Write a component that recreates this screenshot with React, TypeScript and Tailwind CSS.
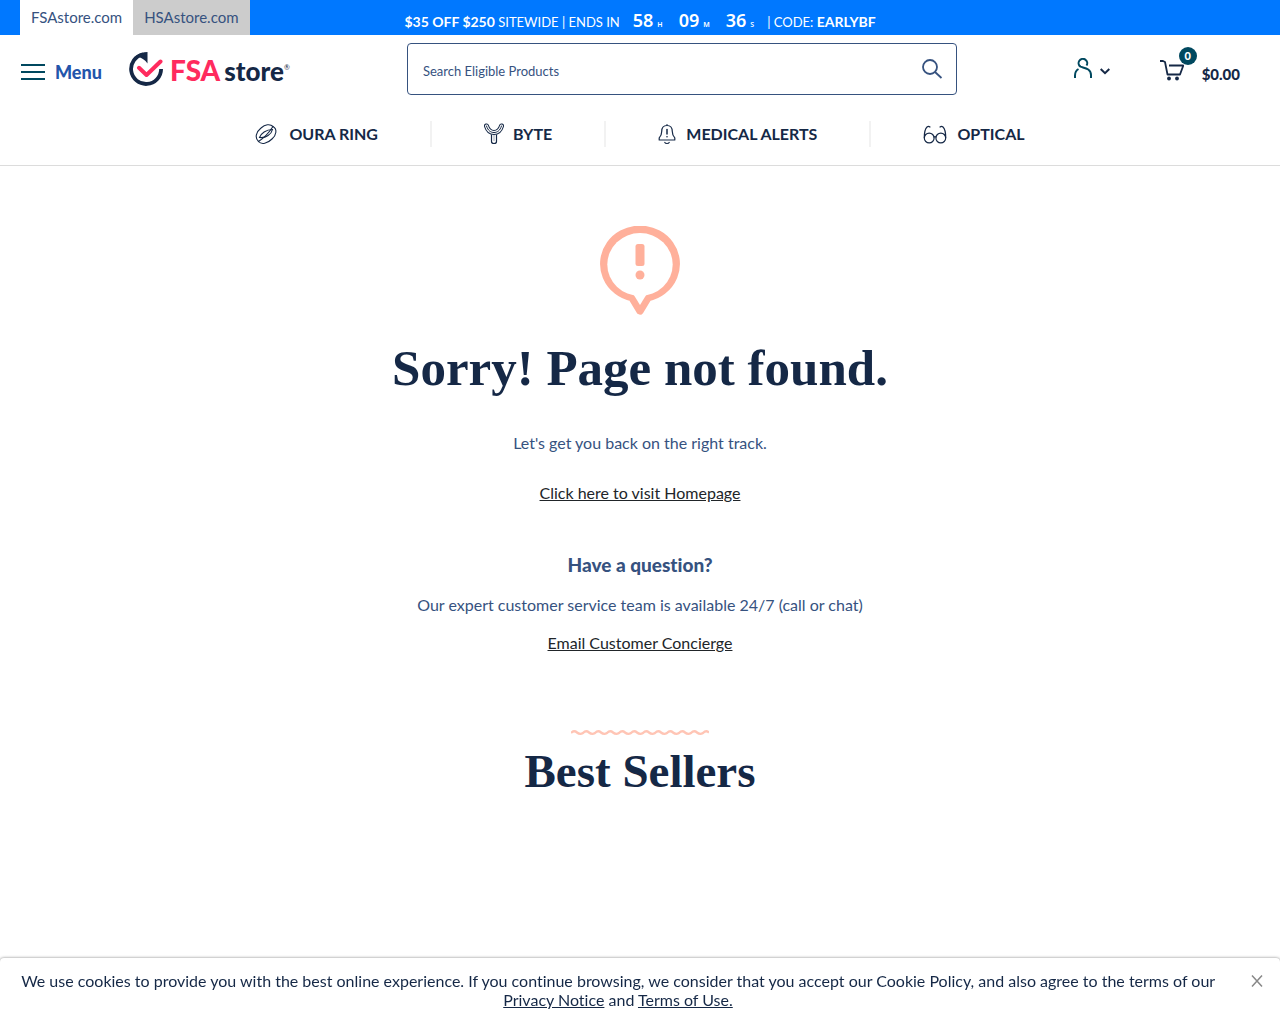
import React from "react";

function LogoMark() {
  return (
    <svg width="34" height="34" viewBox="0 0 34 34" fill="none" aria-hidden="true">
      <path d="M14 2.300A15 15 0 1 0 32.100 17" stroke="#152846" strokeWidth="3.800" />
      <path d="M7 4Q12 .200 18.500 0V11.500Q15 6 7 4Z" fill="#152846" />
      <path d="M10 15.800L17.500 23L31.500 9.500" stroke="#ff2b5e" strokeWidth="4" strokeLinecap="round" strokeLinejoin="round" />
    </svg>
  );
}

function RingIcon() {
  return (
    <svg width="22" height="22" viewBox="0 0 22 22" fill="none" stroke="#152846" strokeWidth="1.100" aria-hidden="true">
      <path d="M3.500 18.500C-.500 15 1 9 6 5C10 1.500 15 .500 18 3.500C15 8 10 14.500 3.500 18.500Z" />
      <path d="M18 3.500C22.500 6 21.500 12 17 16C12.500 20.500 6.500 22 3.500 18.500" />
      <path d="M4.500 14.500C6 10.500 11 6.500 17.500 6.500C16.500 11 11 15.500 4.500 14.500Z" />
    </svg>
  );
}

function ByteIcon() {
  return (
    <svg width="20" height="22" viewBox="0 0 20 22" fill="none" aria-hidden="true">
      <path d="M2.500 3C4 8 7 9.500 10 9.500S16 8 17.500 3" stroke="#152846" strokeWidth="5" strokeLinecap="round" />
      <path d="M2.500 3C4 8 7 9.500 10 9.500S16 8 17.500 3" stroke="#fff" strokeWidth="3" strokeLinecap="round" />
      <path d="M2.500 3C4 8 7 9.500 10 9.500S16 8 17.500 3" stroke="#152846" strokeWidth="1" strokeLinecap="round" />
      <path d="M7.500 11.500V18.500Q7.500 20.500 10 20.500T12.500 18.500V11.500" stroke="#152846" strokeWidth="1.200" />
      <path d="M10 12V18" stroke="#152846" strokeWidth="1" opacity=".4" />
    </svg>
  );
}

function BellIcon() {
  return (
    <svg width="18" height="22" viewBox="0 0 18 22" fill="none" stroke="#152846" strokeWidth="1.200" strokeLinecap="round" strokeLinejoin="round" aria-hidden="true">
      <path d="M9 1.500V2.500M9 2.500C5.500 2.500 3.700 5 3.700 8.500C3.700 12 3 13 1.200 14.800V17H16.800V14.800C15 13 14.300 12 14.300 8.500C14.300 5 12.500 2.500 9 2.500Z" />
      <path d="M9 6.500V11" strokeWidth="1.500" />
      <path d="M9 13.700V13.800" strokeWidth="1.600" />
      <path d="M6.800 19.500C7.500 20.800 10.500 20.800 11.200 19.500" />
    </svg>
  );
}

function GlassesIcon() {
  return (
    <svg width="24" height="22" viewBox="0 0 24 22" fill="none" stroke="#152846" strokeWidth="1.200" strokeLinecap="round" aria-hidden="true">
      <circle cx="6.200" cy="15" r="4.900" />
      <circle cx="17.800" cy="15" r="4.900" />
      <path d="M11 14Q12 13.200 13 14M1.300 14.500C1.300 9.500 2.500 5.500 4 4Q5.500 2.800 7 4M22.700 14.500C22.700 9.500 21.500 5.500 20 4Q18.500 2.800 17 4" />
    </svg>
  );
}

const NAV = [
  { label: "OURA RING", Icon: RingIcon, gap: "gap-3" },
  { label: "BYTE", Icon: ByteIcon, gap: "gap-[9px]" },
  { label: "MEDICAL ALERTS", Icon: BellIcon, gap: "gap-[10px]" },
  { label: "OPTICAL", Icon: GlassesIcon, gap: "gap-[10px]" },
];

const TIMER = [
  ["58", "H"],
  ["09", "M"],
  ["36", "S"],
];

function TopBar() {
  return (
    <div className="grid h-[35px] grid-cols-[1fr_auto_1fr] bg-[#0078ff] px-5">
      <nav aria-label="Stores" className="flex text-[15px] leading-[34px] text-[#36527f]">
        <a href="#fsa" className="h-[35px] bg-white px-[11px]">FSAstore.com</a>
        <a href="#hsa" className="h-[35px] bg-[#cccccc] px-[11px]">HSAstore.com</a>
      </nav>
      <p className="flex items-baseline pt-2 text-[13px] leading-6 whitespace-pre text-white">
        <b className="text-sm leading-6">$35 OFF $250</b> SITEWIDE | ENDS IN
        <span className="mx-[13px] flex gap-4 font-['Noto_Sans'] text-lg leading-6 font-semibold">
          {TIMER.map(([n, u]) => (
            <span key={u} className="flex items-baseline gap-1">
              {n}
              <small className="text-[7px] leading-none">{u}</small>
            </span>
          ))}
        </span>
        | CODE: <b className="text-sm leading-6">EARLYBF</b>
      </p>
    </div>
  );
}

function Header() {
  return (
    <header className="border-b border-[#dcdcdc]">
      <TopBar />
      <div className="flex h-[68px] items-center pr-10 pl-5">
        <button className="mt-[6px] flex items-center gap-[9px] text-lg font-black text-[#2355ab]">
          <svg width="26" height="18" viewBox="0 0 26 18" stroke="#00485f" strokeWidth="2" aria-hidden="true">
            <path d="M1 2H25M1 9H25M1 16H25" />
          </svg>
          Menu
        </button>
        <a href="#home" className="ml-[27px] flex w-[165px] items-center" aria-label="FSA store home">
          <LogoMark />
          <span className="mt-[2px] ml-[7px] flex items-baseline leading-9 font-black text-[#152846]">
            <span className="text-[28px] leading-9 text-[#ff2b5e]">FSA</span>
            <span className="ml-1 text-[26px] leading-9">store</span>
            <sup className="self-center text-[7px] font-normal">®</sup>
          </span>
        </a>
        <form className="mr-auto ml-[113px] flex h-[52px] w-[550px] items-center rounded border border-[#36527f] pr-[13px] pl-[15px]" onSubmit={(e) => e.preventDefault()}>
          <input aria-label="Search Eligible Products" placeholder="Search Eligible Products" className="min-w-0 flex-1 pt-[6px] text-[13px] text-[#36527f] outline-none placeholder:text-[#36527f]" />
          <button aria-label="Search">
            <svg width="22" height="22" viewBox="0 0 22 22" fill="none" stroke="#36527f" strokeWidth="1.800" aria-hidden="true">
              <circle cx="9" cy="9" r="7" />
              <path d="M14 14L20.500 20" />
            </svg>
          </button>
        </form>
        <button aria-label="Account" className="flex items-center gap-2">
          <svg width="18" height="22" viewBox="0 0 18 22" fill="none" stroke="#00485f" strokeWidth="2" aria-hidden="true">
            <path d="M1 20V17.500Q1 13 4.500 11M12.500 7.500A4.300 4.300 0 1 0 6.500 8.700C9.500 10 17 10 17 17V20" />
          </svg>
          <svg width="10" height="7" viewBox="0 0 10 7" fill="none" stroke="#152846" strokeWidth="2" className="mt-1" aria-hidden="true">
            <path d="M.700 1L5 5.200L9.300 1" />
          </svg>
        </button>
        <a href="#cart" className="relative mt-[2px] ml-[50px] flex items-center text-[15px] font-black text-[#152846]">
          <svg width="24" height="22" viewBox="0 0 24 22" fill="none" stroke="#152846" strokeWidth="1.800" strokeLinejoin="round" aria-hidden="true">
            <path d="M0 2H3L5 3L7.500 15.500H20L23.300 6.500H9" />
            <circle cx="9" cy="19.500" r="1.900" fill="#152846" stroke="none" />
            <circle cx="17" cy="19.500" r="1.900" fill="#152846" stroke="none" />
          </svg>
          <span className="absolute -top-2 left-[19px] flex size-[18px] items-center justify-center rounded-full bg-[#00485f] text-[11px] text-white">0</span>
          <span className="mt-2 ml-[18px]">$0.00</span>
        </a>
      </div>
      <nav aria-label="Categories" className="flex h-[62px] items-center justify-center divide-x-2 divide-[#f2f2f2] text-base font-bold text-[#152846]">
        {NAV.map(({ label, Icon, gap }) => (
          <a key={label} href="#category" className={`flex h-[26px] items-center px-[52px] ${gap}`}>
            <Icon />
            {label}
          </a>
        ))}
      </nav>
    </header>
  );
}

export default function App() {
  return (
    <div className="min-h-screen bg-white font-['Lato',sans-serif] [font-variant-ligatures:none]">
      <Header />
      <main className="flex flex-col items-center pt-[60px] pb-24 text-center text-base leading-6 text-[#36527f]">
        <svg width="80" height="90" viewBox="0 0 80 90" fill="none" aria-hidden="true">
          <path d="M32 71.800A36.300 34.700 0 1 1 48 71.800L40 85Z" fill="#ffb09b" stroke="#ffb09b" strokeWidth="7.300" strokeLinejoin="round" />
          <ellipse cx="40" cy="38.500" rx="32.700" ry="31.500" fill="#fff" />
          <path d="M32 66L40 79L48 66Z" fill="#fff" />
          <rect x="35.500" y="18" width="9" height="22" rx="2.500" fill="#ffb09b" />
          <circle cx="40" cy="49" r="4.500" fill="#ffb09b" />
        </svg>
        <h1 className="mt-6 font-['Liberation_Serif',serif] text-[51px] leading-[56px] font-bold text-[#152846]">Sorry! Page not found.</h1>
        <p className="mt-[35px]">Let's get you back on the right track.</p>
        <a href="#home" className="mt-[26px] text-[#212529] underline">Click here to visit Homepage</a>
        <h2 className="mt-12 text-[19px] leading-6 font-black">Have a question?</h2>
        <p className="mt-4">Our expert customer service team is available 24/7 (call or chat)</p>
        <a href="#email" className="mt-[14px] text-[#212529] underline">Email Customer Concierge</a>
        <svg width="138" height="6" viewBox="0 0 138 6" fill="none" className="mt-[75px]" aria-hidden="true">
          <path d="M0 3Q3 0 6 2.500T12 3Q15 0 18 2.500T24 3Q27 0 30 2.500T36 3Q39 0 42 2.500T48 3Q51 0 54 2.500T60 3Q63 0 66 2.500T72 3Q75 0 78 2.500T84 3Q87 0 90 2.500T96 3Q99 0 102 2.500T108 3Q111 0 114 2.500T120 3Q123 0 126 2.500T132 3Q135 0 138 2.500" stroke="#ffc5b5" strokeWidth="2.400" />
        </svg>
        <h2 className="mt-[10px] font-['Liberation_Serif',serif] text-[47px] leading-[50px] font-bold text-[#152846]">Best Sellers</h2>
      </main>
      <aside aria-label="Cookie notice" className="fixed inset-x-0 bottom-0 flex items-start rounded-t bg-white px-[15px] pt-[13px] pb-[15px] text-[#152846] shadow-[0_0_3px_rgba(0,0,0,0.5)]">
        <p className="flex-1 text-center text-base leading-[19px]">
          We use cookies to provide you with the best online experience. If you continue browsing, we consider that you accept our Cookie Policy, and also agree to the terms of our{" "}
          <a href="#privacy" className="underline">Privacy Notice</a> and <a href="#terms" className="underline">Terms of Use.</a>
        </p>
        <button aria-label="Close" className="mt-[3px] ml-7">
          <svg width="16" height="14" viewBox="0 0 16 14" stroke="#888" strokeWidth="1.500" aria-hidden="true">
            <path d="M3 1.500L13 12.500M13 1.500L3 12.500" />
          </svg>
        </button>
      </aside>
    </div>
  );
}
